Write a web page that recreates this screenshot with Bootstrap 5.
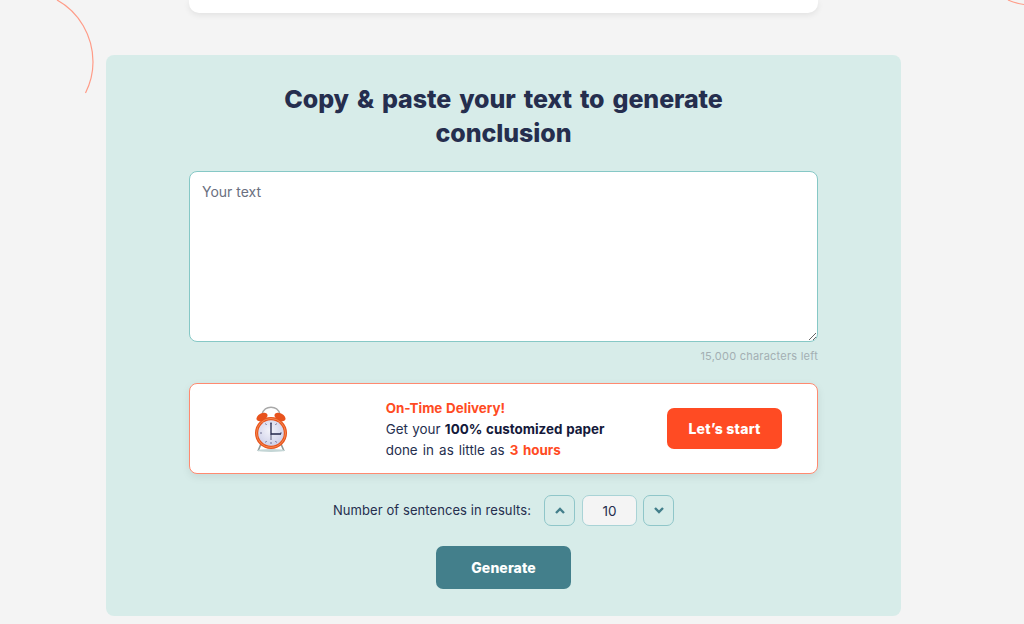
<!DOCTYPE html>
<html lang="en">
<head>
  <meta charset="UTF-8">
  <title>Conclusion Generator</title>
  <meta name="viewport" content="width=device-width, initial-scale=1.0">
  <link href="https://cdn.jsdelivr.net/npm/bootstrap@5.3.2/dist/css/bootstrap.min.css" rel="stylesheet">
  <style>
    body {
      background-color: #f4f4f4;
      font-family: Inter, "Open Sans", sans-serif;
      color: #252e4e;
      height: 624px;
      overflow: hidden;
      position: relative;
    }
    .arc-deco {
      position: absolute;
      top: 0;
      left: 0;
    }
    .top-sheet {
      width: 629px;
      height: 13px;
      margin: 0 0 42px 189px;
      background: #fff;
      border-radius: 0 0 10px 10px;
      box-shadow: 0 2px 6px rgba(0, 0, 0, .08);
    }
    .tool-panel {
      width: 795px;
      height: 561px;
      margin-left: 106px;
      padding: 27px 83px 0;
      background: #d7ece9;
      border-radius: 8px;
    }
    .tool-title {
      font-size: 25px;
      font-weight: 800;
      line-height: 34px;
      color: #252e4e;
      width: 480px;
      margin: 0 auto 21px;
      text-align: center;
      letter-spacing: -.1px;
      word-spacing: 2.7px;
    }
    .tool-input {
      display: block;
      width: 100%;
      height: 171px;
      padding: 9px 12px;
      font-size: 14px;
      color: #252e4e;
      border: 1px solid #86c8c6;
      border-radius: 8px;
      background: #fff;
      outline: none;
    }
    .tool-input::placeholder {
      color: #6a6f80;
      opacity: 1;
    }
    .chars-left {
      font-size: 11px;
      line-height: 14px;
      color: #a3afb3;
      margin-top: 7px;
      letter-spacing: .23px;
    }
    .promo-box {
      height: 91px;
      margin-top: 20px;
      background: #fff;
      border: 1px solid #ff8a70;
      border-radius: 8px;
      box-shadow: 0 3px 8px rgba(0, 0, 0, .08);
    }
    .promo-clock {
      width: 196px;
      padding-left: 64px;
    }
    .promo-text {
      width: 282px;
      margin-top: 2px;
      font-size: 13.4px;
      line-height: 21px;
      word-spacing: .6px;
      color: #252e4e;
    }
    .promo-text b {
      font-weight: 700;
      color: #14193a;
    }
    .promo-last {
      word-spacing: 1.400px;
    }
    .promo-hot {
      font-weight: 700;
      color: #ff4b23;
    }
    .btn-start {
      width: 115px;
      height: 41px;
      margin-right: 35px;
      padding: 0;
      font-size: 14px;
      font-weight: 800;
      letter-spacing: .2px;
      color: #fff;
      background: #ff4b23;
      border: 0;
      border-radius: 7px;
    }
    .btn-start:hover {
      color: #fff;
      background: #ff4b23;
    }
    .count-row {
      margin-top: 21px;
      height: 31px;
      font-size: 13px;
      letter-spacing: .08px;
    }
    .count-label {
      margin-right: 13px;
    }
    .step-btn {
      width: 31px;
      height: 31px;
      padding: 0;
      border: 1px solid #8fc6c9;
      border-radius: 7px;
      background: transparent;
    }
    .count-value {
      width: 55px;
      height: 31px;
      margin: 0 6px 0 7px;
      padding: 0;
      font-size: 13.5px;
      text-align: center;
      color: #252e4e;
      background: #f4f4f4;
      border: 1px solid #a9d3d6;
      border-radius: 7px;
      outline: none;
    }
    .btn-generate {
      display: block;
      width: 135px;
      height: 43px;
      margin: 20px auto 0;
      padding: 0;
      font-size: 14px;
      font-weight: 800;
      letter-spacing: .1px;
      color: #fff;
      background: #437f8b;
      border: 0;
      border-radius: 7px;
    }
    .btn-generate:hover {
      color: #fff;
      background: #437f8b;
    }
  </style>
</head>
<body>

  <!-- Background arcs -->
  <svg class="arc-deco" width="1024" height="100" viewBox="0 0 1024 100" fill="none" stroke="#ff9c88" stroke-width="1.2">
    <path d="M57 0C79 12 93 36 93 62C93 74 90 84 85.500 93"/>
    <path d="M1008 0C1012 2 1018 3.500 1024 4.500"/>
  </svg>

  <div class="top-sheet"></div>

  <div class="tool-panel">
    <h1 class="tool-title">Copy &amp; paste your text to generate conclusion</h1>

    <textarea class="tool-input" placeholder="Your text"></textarea>
    <div class="chars-left text-end">15,000 characters left</div>

    <!-- Promo -->
    <div class="promo-box d-flex align-items-center">
      <div class="promo-clock d-flex">
        <svg width="34" height="46" viewBox="0 0 34 46">
          <defs>
            <radialGradient id="clockFace" cx=".45" cy=".4" r=".7">
              <stop offset="0" stop-color="#f3f3fa"/>
              <stop offset="1" stop-color="#c9cbe6"/>
            </radialGradient>
          </defs>
          <path d="M8 8C11 -1 23 -1 26 8" fill="none" stroke="#a8a8a8" stroke-width="1.300"/>
          <path d="M4 45L7 38M30 45L27 38" stroke="#8f9a9a" stroke-width="1.600"/>
          <ellipse cx="17" cy="44.500" rx="14" ry="1.400" fill="#c4d6d6"/>
          <ellipse cx="8" cy="11" rx="6" ry="3.600" fill="#e8531d" transform="rotate(-28 8 11)"/>
          <ellipse cx="26" cy="11" rx="6" ry="3.600" fill="#e8531d" transform="rotate(28 26 11)"/>
          <circle cx="17" cy="27" r="16" fill="#e8531d"/>
          <circle cx="17" cy="27" r="14.500" fill="none" stroke="#f58a4e" stroke-width="1"/>
          <circle cx="17" cy="27" r="12.800" fill="url(#clockFace)"/>
          <path d="M17 16V18M17 36V38M6 27H8M26 27H28M11.500 17.500L12.500 19M22.500 17.500L21.500 19M11.500 36.500L12.500 35M22.500 36.500L21.500 35" stroke="#5d6086" stroke-width=".9"/>
          <path d="M17 17V28H27" fill="none" stroke="#23264a" stroke-width="1.300"/>
          <path d="M17 28V34" stroke="#23264a" stroke-width=".7"/>
        </svg>
      </div>
      <div class="promo-text ms-auto">
        <div class="promo-hot">On-Time Delivery!</div>
        <div>Get your <b>100% customized paper</b></div>
        <div class="promo-last">done in as little as <span class="promo-hot">3 hours</span></div>
      </div>
      <button class="btn btn-start flex-shrink-0" type="button">Let’s start</button>
    </div>

    <!-- Sentence count -->
    <div class="count-row d-flex align-items-center justify-content-center">
      <span class="count-label">Number of sentences in results:</span>
      <button class="step-btn d-flex align-items-center justify-content-center" type="button" aria-label="More">
        <svg width="10" height="7" viewBox="0 0 10 7" fill="none" stroke="#437f8b" stroke-width="2.400"><path d="M1 6L5 2L9 6"/></svg>
      </button>
      <input class="count-value" type="text" value="10">
      <button class="step-btn d-flex align-items-center justify-content-center" type="button" aria-label="Less">
        <svg width="10" height="7" viewBox="0 0 10 7" fill="none" stroke="#437f8b" stroke-width="2.400"><path d="M1 1L5 5L9 1"/></svg>
      </button>
    </div>

    <button class="btn btn-generate" type="button">Generate</button>
  </div>

  <script src="https://cdn.jsdelivr.net/npm/bootstrap@5.3.2/dist/js/bootstrap.bundle.min.js"></script>
</body>
</html>
